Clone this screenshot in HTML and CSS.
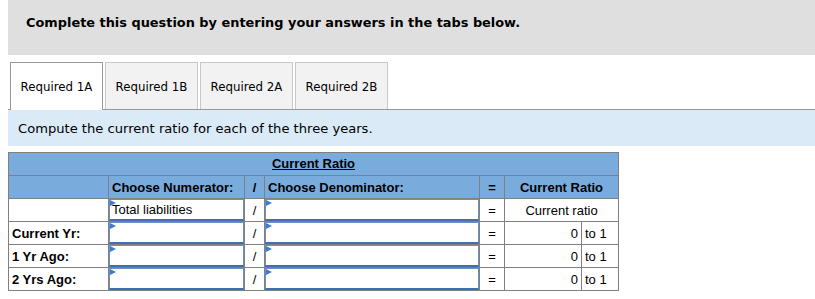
FILE: index.html
```html
<!DOCTYPE html>
<html lang="en">
<head>
    <meta charset="UTF-8">
    <title>Current Ratio</title>
    <link rel="stylesheet" href="styles.css">
</head>
<body>
    <div class="instructions">Complete this question by entering your answers in the tabs below.</div>

    <div class="tabs">
        <div class="tab active">Required 1A</div>
        <div class="tab">Required 1B</div>
        <div class="tab">Required 2A</div>
        <div class="tab">Required 2B</div>
    </div>

    <div class="prompt">Compute the current ratio for each of the three years.</div>

    <table class="ratio">
        <colgroup>
            <col class="c-label">
            <col class="c-num">
            <col class="c-slash">
            <col class="c-den">
            <col class="c-eq">
            <col class="c-val">
            <col class="c-unit">
        </colgroup>
        <tr class="head">
            <th colspan="7" class="title"><u>Current Ratio</u></th>
        </tr>
        <tr class="head">
            <th></th>
            <th class="left">Choose Numerator:</th>
            <th>/</th>
            <th class="left">Choose Denominator:</th>
            <th>=</th>
            <th colspan="2">Current Ratio</th>
        </tr>
        <tr>
            <td class="label"></td>
            <td class="pick"><div class="select">Total liabilities</div></td>
            <td>/</td>
            <td class="pick"><div class="select"></div></td>
            <td>=</td>
            <td colspan="2">Current ratio</td>
        </tr>
        <tr>
            <td class="label">Current Yr:</td>
            <td class="pick"><div class="select"></div></td>
            <td>/</td>
            <td class="pick"><div class="select"></div></td>
            <td>=</td>
            <td class="num">0</td>
            <td class="unit">to 1</td>
        </tr>
        <tr>
            <td class="label">1 Yr Ago:</td>
            <td class="pick"><div class="select"></div></td>
            <td>/</td>
            <td class="pick"><div class="select"></div></td>
            <td>=</td>
            <td class="num">0</td>
            <td class="unit">to 1</td>
        </tr>
        <tr>
            <td class="label">2 Yrs Ago:</td>
            <td class="pick"><div class="select"></div></td>
            <td>/</td>
            <td class="pick"><div class="select"></div></td>
            <td>=</td>
            <td class="num">0</td>
            <td class="unit">to 1</td>
        </tr>
    </table>
</body>
</html>
```

FILE: styles.css
```css
body {
    margin: 0 0 0 8px;
    font-family: "DejaVu Sans", Verdana, sans-serif;
    color: #000;
    background-color: #fff;
}
.instructions {
    background-color: #dfdfdf;
    height: 55px;
    box-sizing: border-box;
    padding: 15px 0 0 18px;
    font-size: 12.9px;
    font-weight: bold;
    line-height: 16px;
}
.tabs {
    display: flex;
    gap: 2px;
    margin-top: 7px;
    padding-left: 2px;
    border-bottom: 1px solid #999;
}
.tab {
    width: 93px;
    height: 47px;
    box-sizing: border-box;
    border: 1px solid #c8c8c8;
    border-bottom: none;
    background-color: #f2f2f2;
    font-size: 11.8px;
    line-height: 48px;
    text-align: center;
}
.tab.active {
    background-color: #fff;
    border-color: #999;
    height: 48px;
    margin-bottom: -1px;
}
.prompt {
    background-color: #dbeaf7;
    height: 36px;
    box-sizing: border-box;
    padding: 11px 0 0 10px;
    font-size: 13.1px;
    line-height: 16px;
}
.ratio {
    margin-top: 6px;
    width: 611px;
    table-layout: fixed;
    border-collapse: collapse;
    font-family: "Liberation Sans", Arial, sans-serif;
    font-size: 13px;
}
.c-label { width: 100px; }
.c-num { width: 136px; }
.c-slash { width: 20px; }
.c-den { width: 215px; }
.c-eq { width: 25px; }
.c-val { width: 77px; }
.c-unit { width: 37px; }
.ratio th, .ratio td {
    border: 1px solid #808080;
    height: 22px;
    padding: 0 3px;
    text-align: center;
}
.ratio .head th {
    background-color: #79acdd;
}
.ratio .title {
    vertical-align: top;
    padding-top: 3px;
    height: 19px;
}
.ratio .left {
    text-align: left;
}
.ratio .label {
    text-align: left;
    font-weight: bold;
}
.ratio .pick {
    padding: 0;
}
.ratio .num {
    text-align: right;
}
.ratio .unit {
    text-align: left;
}
.select {
    position: relative;
    height: 22px;
    box-sizing: border-box;
    border: 1px solid #6a8fc0;
    border-bottom: 2px solid #3f6fae;
    padding-left: 2px;
    text-align: left;
    line-height: 20px;
}
.select::before {
    content: "";
    position: absolute;
    top: 0;
    left: 0;
    border-top: 3px solid transparent;
    border-bottom: 3px solid transparent;
    border-left: 6px solid #3b7dd0;
}
```
